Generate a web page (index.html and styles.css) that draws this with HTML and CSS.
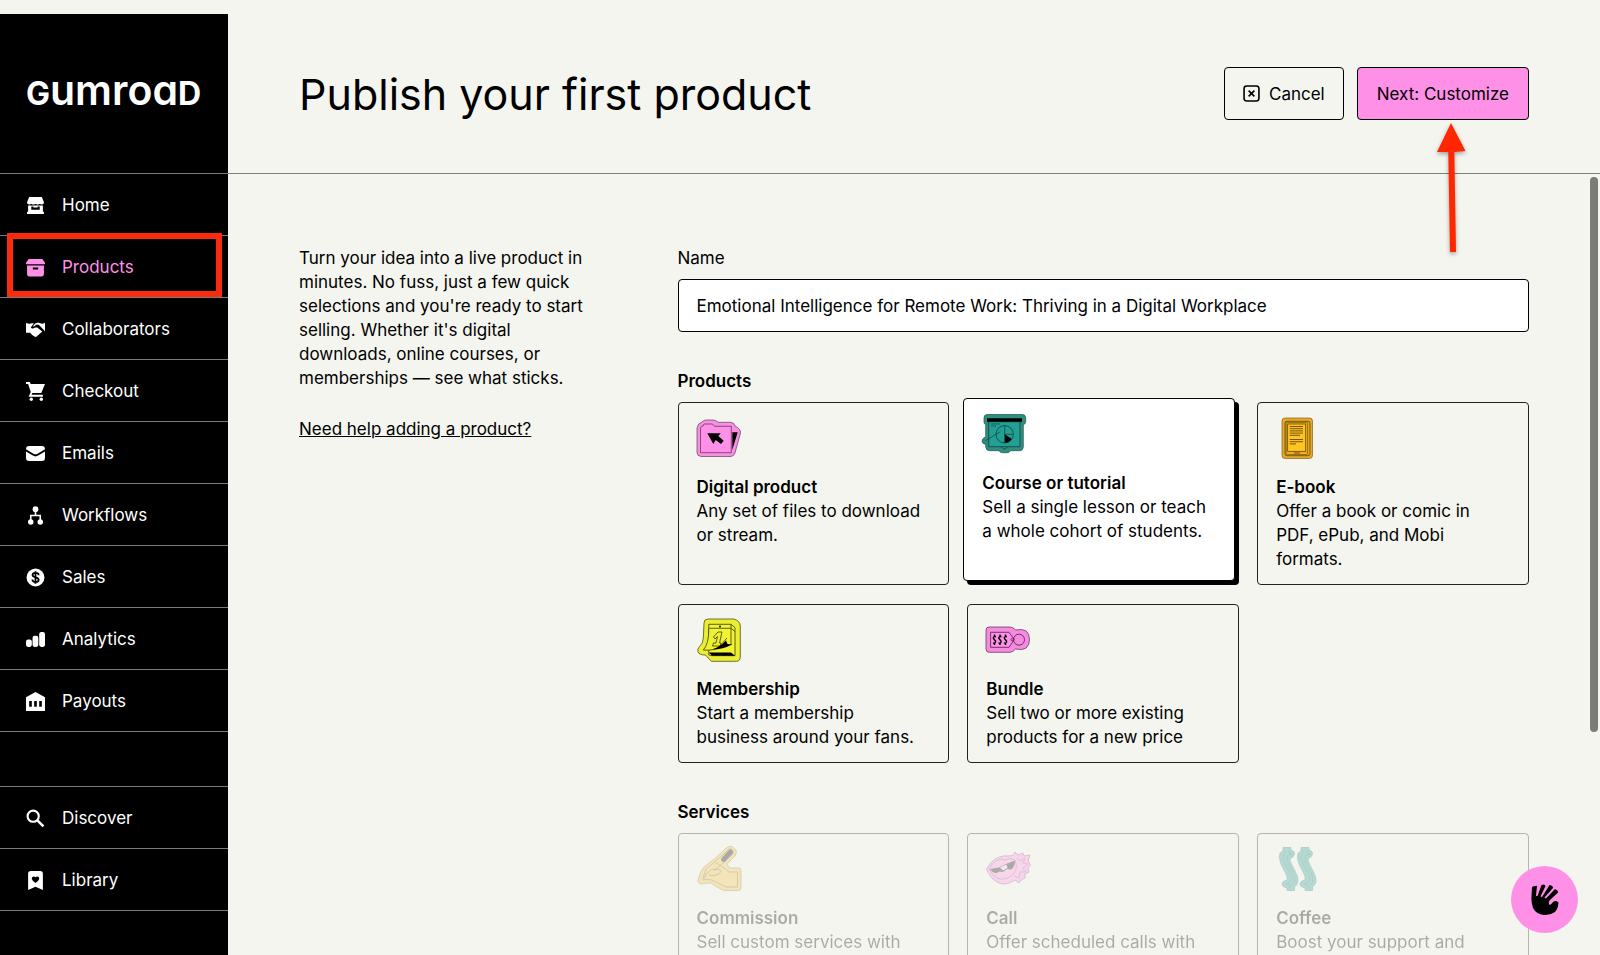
FILE: index.html
```html
<!DOCTYPE html>
<html lang="en">
<head>
  <meta charset="UTF-8">
  <meta name="viewport" content="width=device-width, initial-scale=1.0">
  <title>Publish your first product</title>
  <link rel="stylesheet" href="styles.css">
</head>
<body>
<div class="app">

  <nav class="sidebar" aria-label="Main">
    <a class="logo" href="#"><span class="logo-cap">G</span>umroa<span class="logo-cap">D</span></a>

    <div class="nav-group">
      <a class="nav-item" href="#">
        <svg viewBox="0 0 18 18"><path d="M3 1h12l2 5c0 1.5-1 2-2 2s-1.5-.5-2-.5-1 .5-2 .5-1.5-.5-2-.5-1 .5-2 .5-1.5-.5-2-.5S4 8 3 8 1 7.500 1 6z"/><path fill-rule="evenodd" d="M2 9h14v6h1v2H1v-2h1zm3 1v3h8v-3h-2v1H7v-1z"/></svg>
        Home
      </a>
      <a class="nav-item active" href="#">
        <svg viewBox="0 0 18 18"><path d="M2.500 1h13L18 4.500V6H0V4.500z"/><path fill-rule="evenodd" d="M1 7h16v8a2.500 2.500 0 0 1-2.500 2.500h-11A2.500 2.500 0 0 1 1 15zm5.500 2v2h5V9z"/></svg>
        Products
      </a>
      <a class="nav-item" href="#">
        <svg viewBox="0 0 18 18"><path d="M0 2.500c2 1.500 4 1 6 .5h1.500L4.500 7c1 1.500 3 1 4 0h2l5 4-6 5c-2-.5-4-2-5.500-4H0z"/><path d="M18 2.500c-2 1.500-4 1-6 .2-2-.4-3.500.3-5.500 3.300 1 .5 2-.5 3-1.500h2.500L16.500 9 18 11z"/></svg>
        Collaborators
      </a>
      <a class="nav-item" href="#">
        <svg viewBox="0 0 18 18"><path d="M0 0h3.500l1 2H18l-3.500 8.500H6l-.8 1.500H16v2H2.500l2-4.500L2 2H0z"/><circle cx="5" cy="16.300" r="1.600"/><circle cx="14.500" cy="16.300" r="1.600"/></svg>
        Checkout
      </a>
      <a class="nav-item" href="#">
        <svg viewBox="0 0 18 18"><path d="M3 2h12a3 3 0 0 1 3 3L11 9.200q-2 1.200-4 0L0 5a3 3 0 0 1 3-3z"/><path d="M0 7l6.500 4q2.500 1.500 5 0L18 7v6a3 3 0 0 1-3 3H3a3 3 0 0 1-3-3z"/></svg>
        Emails
      </a>
      <a class="nav-item" href="#">
        <svg viewBox="0 0 18 18"><path d="M9 4v5M4.500 14V9h9v5" fill="none" stroke="currentColor" stroke-width="1.500"/><circle cx="9" cy="3" r="2.700"/><circle cx="4.500" cy="15.200" r="2.600"/><circle cx="13.500" cy="15.200" r="2.600"/></svg>
        Workflows
      </a>
      <a class="nav-item" href="#">
        <svg viewBox="0 0 18 18"><circle cx="9" cy="9" r="8.500"/><path d="M12 6.800C12 5 10.500 4.600 9 4.600S6.200 5.200 6.200 6.700C6.200 9.700 12 8 12 11.200c0 1.500-1.500 2.200-3 2.200s-3-.7-3-2.400M9 3v12" fill="none" stroke="#000" stroke-width="1.700"/></svg>
        Sales
      </a>
      <a class="nav-item" href="#">
        <svg viewBox="0 0 18 18"><rect x="0" y="9" width="5.500" height="7" rx="2"/><rect x="6.200" y="5.500" width="5.500" height="10.500" rx="2"/><rect x="12.500" y="2" width="5.500" height="14" rx="2"/></svg>
        Analytics
      </a>
      <a class="nav-item" href="#">
        <svg viewBox="0 0 18 18"><path fill-rule="evenodd" d="M9 0l9 5v13H0V5zM3 8.500v5.500h2.500V8.500zm4.750 0v5.500h2.500V8.500zm4.750 0v5.500H15V8.500z"/></svg>
        Payouts
      </a>
    </div>

    <div class="nav-group nav-secondary">
      <a class="nav-item" href="#">
        <svg viewBox="0 0 18 18"><path d="M10.800 10.800L16.500 16.500" fill="none" stroke="currentColor" stroke-width="2.500"/><circle cx="6.800" cy="6.800" r="5.300" fill="none" stroke="currentColor" stroke-width="2"/></svg>
        Discover
      </a>
      <a class="nav-item" href="#">
        <svg viewBox="0 0 18 18"><path fill-rule="evenodd" d="M4.500 0h9a2.500 2.500 0 0 1 2.500 2.500V18l-7-3-7 3V2.500A2.500 2.500 0 0 1 4.500 0zM9 6C8 4.500 5.500 5 5.500 7c0 1.800 2 3 3.500 4.300C10.500 10 12.500 8.800 12.500 7c0-2-2.500-2.500-3.500-1z"/></svg>
        Library
      </a>
    </div>
    <div class="highlight"></div>
  </nav>

  <main class="main">
    <header class="page-header">
      <h1>Publish your first product</h1>
      <div class="actions">
        <button class="btn" type="button">
          <svg class="btn-icon" viewBox="0 0 16 16"><rect x="1" y="1" width="14" height="14" rx="2.500"/><path d="M5.300 5.300l5.400 5.400M10.700 5.300l-5.400 5.400"/></svg>
          Cancel
        </button>
        <button class="btn btn-accent" type="button">Next: Customize</button>
      </div>
    </header>

    <div class="content">
      <section class="intro">
        <p>Turn your idea into a live product in minutes. No fuss, just a few quick selections and you're ready to start selling. Whether it's digital downloads, online courses, or memberships — see what sticks.</p>
        <a href="#">Need help adding a product?</a>
      </section>

      <form class="form">
        <div class="field">
          <label for="name">Name</label>
          <input id="name" type="text" value="Emotional Intelligence for Remote Work: Thriving in a Digital Workplace">
        </div>

        <section class="field">
          <h2>Products</h2>
          <div class="cards">
            <button class="card" type="button">
              <svg viewBox="0 0 45 45">
                <path d="M0 12Q1 7 5 6Q7 4 9 4H16Q19 4 21 6.300H34Q37.500 7 38 10Q44 13 43.500 17L38 37Q37 40 34 40.500H4Q0 40 0 36.500z" fill="#f78fe3" stroke="#6b3a63" stroke-width=".7"/>
                <path d="M3.500 36.700V12Q4 10 6 10L7 8H15.500L17.500 10.300H34.300V36.700z" fill="#ff90e8" stroke="#5a2a52" stroke-width=".7"/>
                <path d="M35.300 16.300H40.700L35.300 34zM10.300 17.300L23.700 17.300 21.300 20 26.700 24.700 24 28 18.700 24 16.300 28z"/>
              </svg>
              <strong>Digital product</strong>
              <span>Any set of files to download or stream.</span>
            </button>
            <button class="card selected" type="button" aria-pressed="true">
              <svg viewBox="0 0 45 45">
                <path d="M2 6Q2 2.500 5 2.500H40.500Q43.700 2.500 43.700 6V10Q43.500 12 41.300 12.700V35Q41 38.500 38 38.700H28.500Q27.500 40.700 25 40.700H20.500Q18 40.700 17 38.700H7.500Q4 38.500 3.700 35V32.500Q0 31.500 0 29T3.700 24.700V12.700Q2 12 2 10z" fill="#318e7f" stroke="#17564c" stroke-width=".7"/>
                <path d="M6.700 9.700H38V34.700H6.700z" fill="#23a094" stroke="#123f39" stroke-width=".8"/>
                <path d="M5 6.300H40V9.700H5zM22.700 22.300V31A8.700 8.700 0 0 0 30 27z"/>
                <path d="M9 12H18M9 14H14M22.700 13.700V31M22.700 22.300H31.400M3.500 28.700L18.300 19.700M19.500 35Q22.500 39 25.500 35" fill="none" stroke="#123f39" stroke-width=".7"/>
                <circle cx="22.700" cy="22.300" r="8.700" fill="none" stroke="#123f39" stroke-width=".8"/>
              </svg>
              <strong>Course or tutorial</strong>
              <span>Sell a single lesson or teach a whole cohort of students.</span>
            </button>
            <button class="card" type="button">
              <svg viewBox="0 0 45 45">
                <rect x="6" y="2" width="30.500" height="40.500" rx="3" fill="#e3a92c" stroke="#846018" stroke-width=".7"/>
                <rect x="9" y="5.300" width="25" height="34.400" rx="2" fill="#e2a51e" stroke="#50390b" stroke-width=".7"/>
                <rect x="10.200" y="6.500" width="21.300" height="32" rx="1" fill="#f0b11c" stroke="#50390b" stroke-width=".5"/>
                <rect x="11.700" y="8" width="18" height="27.300" fill="#ffc41f" stroke="#50390b" stroke-width=".7"/>
                <path d="M13.700 10.500H27M13.700 12.700H27M13.700 14.900H27M13.700 17.100H27M13.700 19.300H24M13.700 23.500H27M13.700 25.700H27M13.700 27.900H20M18 37H24" stroke="#50390b" stroke-width=".8"/>
              </svg>
              <strong>E-book</strong>
              <span>Offer a book or comic in PDF, ePub, and Mobi formats.</span>
            </button>
            <button class="card" type="button">
              <svg viewBox="0 0 45 45">
                <path d="M7 5Q7 1 11 1H37Q43.300 3 43.300 8V39Q43 43.300 39.500 43.300H14.500Q11 40 8.500 37Q2 37 1 34Q0 31 2.500 28.500Q6 26 6.300 20z" fill="#e9ee33" stroke="#4e5012" stroke-width=".8"/>
                <path d="M11.800 37V6.300H34L38 9.700V37.700H15zM11.800 10.300H34V27M34 6.300V10.300L38 13.500" fill="#f1f333" stroke="#3a3b0c" stroke-width=".8"/>
                <path d="M11.800 10.300Q12 26 6.300 32Q17 33 22 29L30 20" fill="#eef033" stroke="#3a3b0c" stroke-width=".8"/>
                <path d="M16.500 19L21 14H25L22.500 25H24L23.300 28H15.500L16.500 25H19L20.500 18.500L18 21z" fill="none" stroke="#3a3b0c" stroke-width=".8"/>
                <path d="M11.800 34.500H34L38 37.700H15zM15 31.500Q23 29 29 22.500L30.500 26 35.200 26.500Q26 31.500 15 31.500z"/>
                <circle cx="23" cy="8.500" r=".9"/>
              </svg>
              <strong>Membership</strong>
              <span>Start a membership business around your fans.</span>
            </button>
            <button class="card" type="button">
              <svg viewBox="0 0 45 45">
                <path d="M0 12Q0 9 3 9H24Q27 9 29.500 12Q43.500 9 43.500 21.500T29.500 31Q27 34.300 24 34.300H3Q0 34 0 31z" fill="#f58ae0" stroke="#6b3a63" stroke-width=".8"/>
                <path d="M4.600 14.300H23L28.300 21.600 23 29.300H4.600z" fill="#ff90e8" stroke="#4a2244" stroke-width=".8"/>
                <circle cx="33" cy="21.700" r="5.500" fill="none" stroke="#4a2244" stroke-width=".8"/>
                <circle cx="26" cy="21.700" r="1.200" fill="none" stroke="#4a2244" stroke-width=".7"/>
                <path d="M10 18.500Q6.500 18.500 7.500 20.500L9.500 23Q10 25.500 7 25M15.500 18.500Q12 18.500 13 20.500L15 23Q15.500 25.500 12.500 25M21 18.500Q17.500 18.500 18.500 20.500L20.500 23Q21 25.500 18 25M8.500 16.500V18M8.500 25.500V27M14 16.500V18M14 25.500V27M19.500 16.500V18M19.500 25.500V27" fill="none" stroke="#000" stroke-width="1.400"/>
              </svg>
              <strong>Bundle</strong>
              <span>Sell two or more existing products for a new price</span>
            </button>
          </div>
        </section>

        <section class="field">
          <h2>Services</h2>
          <div class="cards">
            <button class="card" type="button" disabled>
              <svg viewBox="0 0 45 45">
                <path d="M18.500 11L28.500 1.500Q34-3 38 2Q41 5 38 9L30 17Q31 20 34 21H42Q44 21 44 24V41Q44 43.500 41 43.500H28Q25 43.500 13.700 36Q7 36 4 37Q0 36 1.500 32Q3 24 7 20Q12 16 18.500 11z" fill="#f5c042" stroke="#8a6410" stroke-width=".8"/>
                <path d="M6 31L9 22L29 5Q34-1 36 4Q37 6 35 8L17 24M18 15L27 21L32 25H40.500V40H29L15 33Q9 32 6 33L10 26Q14 21 20 22T22 27Q17 30 12 28" fill="none" stroke="#70500c" stroke-width=".8"/>
                <path d="M26.500 12.500L33.500 5" stroke="#000" stroke-width="5" stroke-linecap="round"/>
              </svg>
              <strong>Commission</strong>
              <span>Sell custom services with</span>
            </button>
            <button class="card" type="button" disabled>
              <svg viewBox="0 0 45 45">
                <path d="M0.500 22Q6 13 12 10.500Q18 8 22 9L27 8.500L29 5L32 8L37 6L38 9L44 8L42 14L44.500 18L42 21L43 25L39 27L39 31L35 33L33 36L29 33Q20 39 13 36Q4 32 .5 22z" fill="#ff90e8" stroke="#8c3f7e" stroke-width=".9"/>
                <path d="M3 22Q8 13 15 12L19 13Q25 10 29 13Q34 25 22 31Q10 36 3 22zM31 11L34 14L39 11L37 16L42 17L37 21L40 25L34 25L33 31L28 29" fill="none" stroke="#8c3f7e" stroke-width=".8"/>
                <path d="M4 22L13 20.500L20 17L29 13.500Q29 20 25 22.500L21 22L17 25L13 24.500L11 26Q6 26 4 22z"/>
                <path d="M14 20.500L20.500 17.500L21.500 21L17 23.500z" fill="#f3c5ec"/>
              </svg>
              <strong>Call</strong>
              <span>Offer scheduled calls with</span>
            </button>
            <button class="card" type="button" disabled>
              <svg viewBox="0 0 45 45">
                <g id="steam" fill="#23a094" stroke="#176a61" stroke-width=".8">
                  <path d="M7 .5H15V3Q19 4 18.500 7Q18 10 14 11.500Q14 15 19 24Q24 33 20.500 38L18.500 40V43.500H11V41Q6 40 6 37Q6 34 11 33Q12 30 8 23Q2 13 4 6L7 4z"/>
                  <path d="M9 3V6Q5 9 9 17Q15 27 16 32Q15 36 10 37L14 38V41.500M13 3V6L16 7L11 9Q10 14 14 20Q20 30 18.500 35L16 38" fill="none"/>
                </g>
                <use href="#steam" x="18"/>
              </svg>
              <strong>Coffee</strong>
              <span>Boost your support and</span>
            </button>
          </div>
        </section>
      </form>
      <div class="scrollbar"></div>
    </div>
  </main>

  <svg class="arrow" viewBox="0 0 40 140">
    <path d="M20 3L34.500 31 23.300 32 25 132H19L17.300 32 6 32z"/>
  </svg>

  <button class="help" type="button" aria-label="Help">
    <svg viewBox="0 0 28 32">
      <path d="M1 4Q1 2 3 2.200L6 1.800L5 12L6.500 12L10.500 1Q14-.5 14.500 2L9.500 12.500L11 13L18.500 1Q22 1.500 22 4L13.500 13.500L15 14.500L24 5Q27.500 6.500 27 8.500L19 16Q17 18 18.500 21Q20 21 22 18Q24.500 16 27.500 18.500Q27 25 24 28Q19 31.500 13 31Q5 30 2 24Q0 18 .5 12z"/>
    </svg>
  </button>
</div>
</body>
</html>
```

FILE: styles.css
```css
* {
  box-sizing: border-box;
}
body {
  margin: 0;
  background: #f4f5ef;
  color: #000;
  font-family: Inter, "Liberation Sans", sans-serif;
  font-size: 17px;
  line-height: 24px;
}
button, input {
  font: inherit;
  color: inherit;
}
a {
  color: inherit;
}

.app {
  position: relative;
  display: flex;
  height: 100vh;
  overflow: hidden;
}

/* Sidebar */
.sidebar {
  position: relative;
  flex: none;
  width: 228px;
  margin-top: 14px;
  background: #000;
  color: #fff;
}
.logo {
  display: flex;
  align-items: baseline;
  height: 159px;
  padding: 0 26px;
  font-size: 41px;
  font-weight: 600;
  line-height: 152px;
  font-feature-settings: "cv11";
  text-decoration: none;
}
.logo-cap {
  font-size: 32px;
  font-weight: 700;
}
.nav-group {
  border-bottom: 1px solid #7a7a7a;
}
.nav-secondary {
  margin-top: 54px;
}
.nav-item {
  display: flex;
  align-items: center;
  gap: 17px;
  height: 62px;
  padding: 1px 26px 0;
  border-top: 1px solid #7a7a7a;
  text-decoration: none;
}
.nav-item svg {
  width: 19px;
  height: 19px;
  fill: currentColor;
}
.nav-item.active {
  color: #ff90e8;
}
.highlight {
  position: absolute;
  top: 219px;
  left: 7px;
  width: 215px;
  height: 64px;
  border: 6px solid #fb2b0d;
}

/* Main */
.main {
  flex: 1;
  display: flex;
  flex-direction: column;
  min-width: 0;
}
.page-header {
  display: flex;
  flex: none;
  align-items: center;
  justify-content: space-between;
  height: 174px;
  padding: 14px 71px 0;
  border-bottom: 1px solid #80807d;
}
h1 {
  margin: 0;
  font-size: 43px;
  font-weight: 400;
  line-height: 54px;
}
.actions {
  display: flex;
  gap: 13px;
}
.btn {
  display: flex;
  align-items: center;
  gap: 9px;
  height: 53px;
  padding: 0 18px;
  border: 1px solid #000;
  border-radius: 4px;
  background: transparent;
}
.btn-accent {
  padding: 0 19px;
  background: #ff90e8;
}
.btn-icon {
  width: 17px;
  height: 17px;
  fill: none;
  stroke: #000;
  stroke-width: 1.5;
}

.content {
  position: relative;
  flex: 1;
  display: grid;
  grid-template-columns: 25% 1fr;
  align-items: start;
  gap: 71px;
  min-height: 0;
  padding: 72px 71px 0;
  overflow: hidden;
}
.intro p {
  margin: 0 0 27px;
}
.form {
  display: grid;
  gap: 37px;
}
.field {
  display: grid;
  gap: 9px;
}
.field input {
  width: 100%;
  height: 53px;
  padding: 0 18px;
  border: 1px solid #000;
  border-radius: 4px;
  background: #fff;
}
h2 {
  margin: 0;
  font-size: 17px;
  font-weight: 600;
  line-height: 24px;
}
.cards {
  display: grid;
  grid-template-columns: repeat(3, 1fr);
  gap: 19px 18px;
}
.card {
  display: flex;
  flex-direction: column;
  padding: 13px 24px 13px 18px;
  border: 1px solid #222;
  border-radius: 4px;
  background: transparent;
  text-align: left;
}
.card svg {
  width: 45px;
  height: 45px;
  margin-bottom: 14px;
  overflow: visible;
}
.card strong {
  font-weight: 600;
}
.card.selected {
  background: #fff;
  border-color: #000;
  box-shadow: 4px 4px 0 #000;
  transform: translate(-4px, -4px);
}
.card:disabled {
  color: #000;
  opacity: .3;
}

.scrollbar {
  position: absolute;
  top: 3px;
  right: 2px;
  width: 8px;
  height: 71%;
  border-radius: 4px;
  background: #7b7b77;
}

/* Overlays */
.arrow {
  position: absolute;
  top: 120px;
  right: 129px;
  width: 40px;
  height: 140px;
  fill: #ff2600;
  filter: drop-shadow(0 2px 2px rgba(0, 0, 0, .35));
}
.help {
  position: absolute;
  right: 22px;
  bottom: 22px;
  display: flex;
  align-items: center;
  justify-content: center;
  width: 67px;
  height: 67px;
  padding: 0;
  border: 0;
  border-radius: 50%;
  background: #ff90e8;
}
.help svg {
  width: 28px;
  height: 32px;
}
```
